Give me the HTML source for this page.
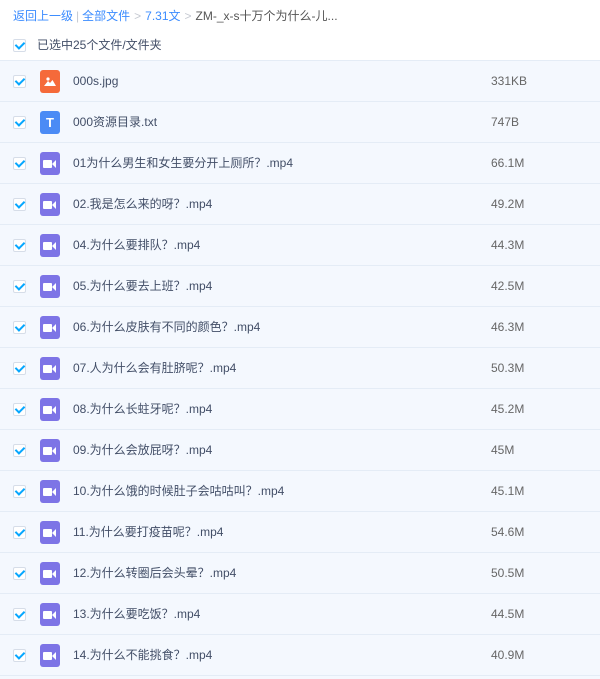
<!DOCTYPE html>
<html><head><meta charset="utf-8"><style>
*{margin:0;padding:0;box-sizing:border-box}
body{width:600px;height:679px;background:#fff;font-family:"Liberation Sans","Noto Sans CJK SC",sans-serif;font-size:12px;color:#424e67;overflow:hidden;position:relative}
.bc{position:absolute;top:8px;left:13px;line-height:16px;height:16px;white-space:nowrap}
.bc a{color:#3b8cff;text-decoration:none}
.bc .s{color:#c5c9d1;margin:0 4px}
.cb{position:absolute;width:13px;height:13px;border:1px solid #d6dde8;background:#fff;border-radius:2px}
.cb:after{content:"";position:absolute;left:3px;top:0px;width:4px;height:7px;border:solid #06a7ff;border-width:0 2px 2px 0;transform:rotate(45deg)}
.all{position:absolute;top:38px;left:13px;height:16px}
.all span{position:absolute;left:24px;top:0;white-space:nowrap;color:#424e67;line-height:14px;height:14px}
.row{position:absolute;left:0;width:600px;height:41px;background:#f4f8fe;border-top:1px solid #e4ecf6}
.row .cb{left:13px;top:14px}
.row .ic{position:absolute;left:40px;top:9px;width:20px;height:23px;border-radius:3px}
.row .n,.row .z{position:absolute;top:12px;white-space:nowrap;line-height:16px;height:16px}
.row .n{left:73px}
.row .z{left:491px;color:#666}
.v{background:#7d74e6}
.v:before{content:"";position:absolute;left:3px;top:8px;width:9px;height:8px;background:#fff;border-radius:1px}
.v:after{content:"";position:absolute;left:12px;top:8px;border:4px solid transparent;border-right:4px solid #fff;border-left:0}
.j{background:#f56a3a}
.t{background:#4b8bf5;color:#fff;font-weight:bold;font-size:13px;text-align:center;line-height:23px}
</style></head><body>
<div class="bc"><a>返回上一级</a><span class="s" style="margin:0 3px">|</span><a>全部文件</a><span class="s">&gt;</span><a>7.31文</a><span class="s">&gt;</span><span style="color:#555">ZM-_x-s十万个为什么-儿...</span></div>
<div class="all"><div class="cb" style="left:0;top:1px"></div><span>已选中25个文件/文件夹</span></div>

<div class="row" style="top:60px"><div class="cb"></div><div class="ic j"><svg width="20" height="23" viewBox="0 0 20 23"><circle cx="8" cy="9" r="1.6" fill="#fff"/><path d="M4 16 L8 11 L10 13 L12.5 10 L16 16Z" fill="#fff"/></svg></div><div class="n">000s.jpg</div><div class="z">331KB</div></div>
<div class="row" style="top:101px"><div class="cb"></div><div class="ic t">T</div><div class="n">000资源目录.txt</div><div class="z">747B</div></div>
<div class="row" style="top:142px"><div class="cb"></div><div class="ic v"></div><div class="n">01为什么男生和女生要分开上厕所？.mp4</div><div class="z">66.1M</div></div>
<div class="row" style="top:183px"><div class="cb"></div><div class="ic v"></div><div class="n">02.我是怎么来的呀？.mp4</div><div class="z">49.2M</div></div>
<div class="row" style="top:224px"><div class="cb"></div><div class="ic v"></div><div class="n">04.为什么要排队？.mp4</div><div class="z">44.3M</div></div>
<div class="row" style="top:265px"><div class="cb"></div><div class="ic v"></div><div class="n">05.为什么要去上班？.mp4</div><div class="z">42.5M</div></div>
<div class="row" style="top:306px"><div class="cb"></div><div class="ic v"></div><div class="n">06.为什么皮肤有不同的颜色？.mp4</div><div class="z">46.3M</div></div>
<div class="row" style="top:347px"><div class="cb"></div><div class="ic v"></div><div class="n">07.人为什么会有肚脐呢？.mp4</div><div class="z">50.3M</div></div>
<div class="row" style="top:388px"><div class="cb"></div><div class="ic v"></div><div class="n">08.为什么长蛀牙呢？.mp4</div><div class="z">45.2M</div></div>
<div class="row" style="top:429px"><div class="cb"></div><div class="ic v"></div><div class="n">09.为什么会放屁呀？.mp4</div><div class="z">45M</div></div>
<div class="row" style="top:470px"><div class="cb"></div><div class="ic v"></div><div class="n">10.为什么饿的时候肚子会咕咕叫？.mp4</div><div class="z">45.1M</div></div>
<div class="row" style="top:511px"><div class="cb"></div><div class="ic v"></div><div class="n">11.为什么要打疫苗呢？.mp4</div><div class="z">54.6M</div></div>
<div class="row" style="top:552px"><div class="cb"></div><div class="ic v"></div><div class="n">12.为什么转圈后会头晕？.mp4</div><div class="z">50.5M</div></div>
<div class="row" style="top:593px"><div class="cb"></div><div class="ic v"></div><div class="n">13.为什么要吃饭？.mp4</div><div class="z">44.5M</div></div>
<div class="row" style="top:634px"><div class="cb"></div><div class="ic v"></div><div class="n">14.为什么不能挑食？.mp4</div><div class="z">40.9M</div></div>
<div style="position:absolute;top:675px;left:0;width:600px;height:4px;border-top:1px solid #e4ecf6;background:#f4f8fe"></div>
</body></html>
